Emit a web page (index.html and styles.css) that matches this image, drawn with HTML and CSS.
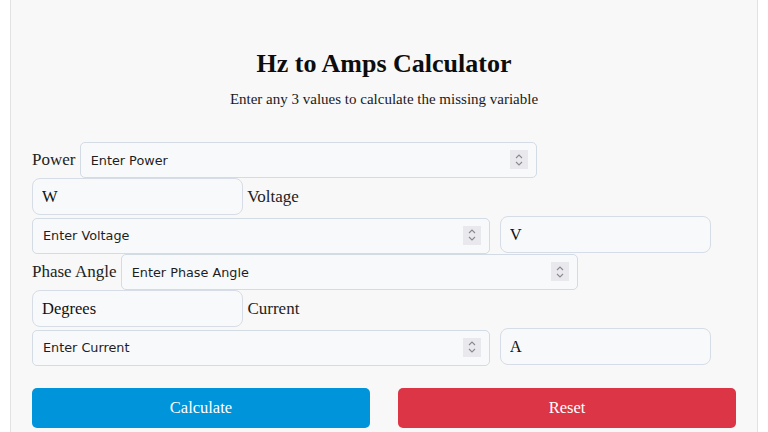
FILE: index.html
```html
<!DOCTYPE html>
<html lang="en">
<head>
<meta charset="utf-8">
<title>Hz to Amps Calculator</title>
<link rel="stylesheet" href="styles.css">
</head>
<body>
<div class="card">
  <h1 class="title">Hz to Amps Calculator</h1>
  <p class="subtitle">Enter any 3 values to calculate the missing variable</p>
  <div class="form">
    <label class="lbl">Power</label>
    <span class="field"><input class="num" type="number" placeholder="Enter Power"><span class="spin"><svg width="18" height="18" viewBox="0 0 18 18"><path d="M6 7 L9 4 L12 7 M6 11 L9 14 L12 11" fill="none" stroke="#8a8a8e" stroke-width="1.1"/></svg></span></span>
    <select class="unit"><option>W</option></select>
    <label class="lbl">Voltage</label>
    <span class="field"><input class="num" type="number" placeholder="Enter Voltage"><span class="spin"><svg width="18" height="18" viewBox="0 0 18 18"><path d="M6 7 L9 4 L12 7 M6 11 L9 14 L12 11" fill="none" stroke="#8a8a8e" stroke-width="1.1"/></svg></span></span>
    <select class="unit"><option>V</option></select>
    <label class="lbl">Phase Angle</label>
    <span class="field"><input class="num" type="number" placeholder="Enter Phase Angle"><span class="spin"><svg width="18" height="18" viewBox="0 0 18 18"><path d="M6 7 L9 4 L12 7 M6 11 L9 14 L12 11" fill="none" stroke="#8a8a8e" stroke-width="1.1"/></svg></span></span>
    <select class="unit"><option>Degrees</option></select>
    <label class="lbl">Current</label>
    <span class="field"><input class="num" type="number" placeholder="Enter Current"><span class="spin"><svg width="18" height="18" viewBox="0 0 18 18"><path d="M6 7 L9 4 L12 7 M6 11 L9 14 L12 11" fill="none" stroke="#8a8a8e" stroke-width="1.1"/></svg></span></span>
    <select class="unit"><option>A</option></select>
  </div>
  <div class="actions">
    <button class="btn btn-calc">Calculate</button>
    <button class="btn btn-reset">Reset</button>
  </div>
</div>
</body>
</html>
```
FILE: styles.css
```css
html, body {
  margin: 0;
  padding: 0;
  background: #ffffff;
}
body {
  font-family: "Liberation Serif", "Times New Roman", serif;
  color: #111;
}
.card {
  margin-left: 10px;
  width: 748px;
  box-sizing: border-box;
  background: #f8f8f8;
  border: 1px solid #e2e2e2;
  border-top: none;
  padding: 49px 21px 20px 21px;
  min-height: 440px;
}
.title {
  margin: 0 0 12px 0;
  font-size: 26px;
  font-weight: bold;
  text-align: center;
  color: #0d0d0d;
}
.subtitle {
  margin: 0 0 34px 0;
  font-size: 15px;
  text-align: center;
  color: #1a1a1a;
}
.form {
  font-size: 17px;
  line-height: 1.25;
}
.lbl {
  color: #222;
}
.field {
  display: inline-block;
  position: relative;
  width: 65%;
  margin-right: 6px;
}
.num {
  display: block;
  width: 100%;
  height: 36px;
  box-sizing: border-box;
  margin: 0;
  padding: 0 8px 0 10px;
  border: 1px solid #d3dbe5;
  border-radius: 5px;
  background: #f8f9fa;
  font-family: "DejaVu Sans", sans-serif;
  font-size: 12.8px;
  color: #1e1e1e;
  outline: none;
  -moz-appearance: textfield;
}
.num::placeholder {
  color: #1e1e1e;
  opacity: 1;
}
.num::-webkit-inner-spin-button,
.num::-webkit-outer-spin-button {
  -webkit-appearance: none;
  margin: 0;
}
.spin {
  position: absolute;
  right: 9px;
  top: 8px;
  width: 18px;
  height: 19px;
  background: #e9e9ed;
  display: flex;
  align-items: center;
  justify-content: center;
}
.spin svg {
  display: block;
}
.unit {
  -webkit-appearance: none;
  appearance: none;
  width: 30%;
  height: 37px;
  box-sizing: border-box;
  margin: 0 0 1px 0;
  padding: 0 9px;
  border: 1px solid #d6dde6;
  border-radius: 8px;
  background: #f8f9fa;
  font-family: "Liberation Serif", "Times New Roman", serif;
  font-size: 16.5px;
  color: #111;
}
.actions {
  display: flex;
  justify-content: space-between;
  margin-top: 22px;
}
.btn {
  width: 48%;
  height: 40px;
  border: none;
  border-radius: 5px;
  color: #fff;
  font-family: "Liberation Serif", "Times New Roman", serif;
  font-size: 16.5px;
}
.btn-calc {
  background: #0095db;
}
.btn-reset {
  background: #dc3545;
}
```
